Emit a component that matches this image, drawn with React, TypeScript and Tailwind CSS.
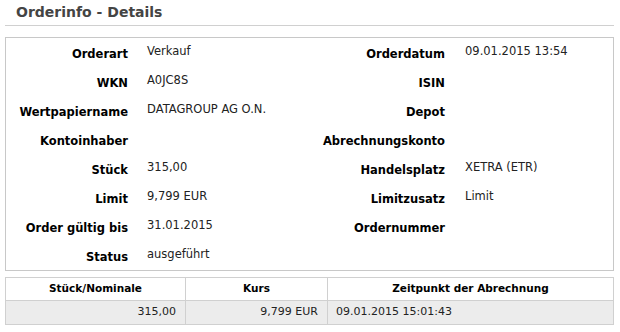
const rows = [
  { l1: 'Orderart', v1: 'Verkauf', l2: 'Orderdatum', v2: '09.01.2015 13:54' },
  { l1: 'WKN', v1: 'A0JC8S', l2: 'ISIN', v2: '' },
  { l1: 'Wertpapiername', v1: 'DATAGROUP AG O.N.', l2: 'Depot', v2: '' },
  { l1: 'Kontoinhaber', v1: '', l2: 'Abrechnungskonto', v2: '' },
  { l1: 'Stück', v1: '315,00', l2: 'Handelsplatz', v2: 'XETRA (ETR)' },
  { l1: 'Limit', v1: '9,799 EUR', l2: 'Limitzusatz', v2: 'Limit' },
  { l1: 'Order gültig bis', v1: '31.01.2015', l2: 'Ordernummer', v2: '' },
  { l1: 'Status', v1: 'ausgeführt', l2: '', v2: '' },
];

const App = () => {
  return (
    <div className="w-[620px] h-[332px] bg-white text-black font-['DejaVu_Sans',sans-serif]">
      {/* Title */}
      <div className="pl-4 pt-[3px] h-[25px] text-[14px] font-bold text-[#444] leading-[18px]">
        Orderinfo - Details
      </div>
      <div className="ml-[5px] w-[609px] border-t border-[#d0d0d0]" />

      {/* Details box */}
      <div className="mt-[11px] ml-[5px] w-[609px] border border-[#c8c8c8]">
        {rows.map((r) => (
          <div key={r.l1} className="flex h-[29px]">
            <div className="w-[122px] text-right text-[11.5px] font-bold leading-[14px] pt-[9px]">{r.l1}</div>
            <div className="ml-[19px] w-[153px] text-[11.5px] leading-[14px] pt-[6px] text-[#222]">{r.v1}</div>
            <div className="w-[145px] text-right text-[11.5px] font-bold leading-[14px] pt-[9px]">{r.l2}</div>
            <div className="ml-[20px] flex-1 text-[11.5px] leading-[14px] pt-[6px] text-[#222]">{r.v2}</div>
          </div>
        ))}
      </div>

      {/* Abrechnung table */}
      <table className="mt-[6px] ml-[5px] w-[609px] border-collapse text-[11px]">
        <thead>
          <tr className="h-[23px]">
            <th className="w-[180px] border border-[#d0d0d0] font-bold text-[10.5px] text-center">Stück/Nominale</th>
            <th className="w-[142px] border border-[#d0d0d0] font-bold text-[10.5px] text-center">Kurs</th>
            <th className="border border-[#d0d0d0] font-bold text-[10.5px] text-center">Zeitpunkt der Abrechnung</th>
          </tr>
        </thead>
        <tbody>
          <tr className="h-[24px] bg-[#ececec] text-[#222]">
            <td className="border border-[#d0d0d0] text-right pr-[9px]">315,00</td>
            <td className="border border-[#d0d0d0] text-right pr-[9px]">9,799 EUR</td>
            <td className="border border-[#d0d0d0] text-left pl-[8px]">09.01.2015 15:01:43</td>
          </tr>
        </tbody>
      </table>
    </div>
  );
};

export default App;
